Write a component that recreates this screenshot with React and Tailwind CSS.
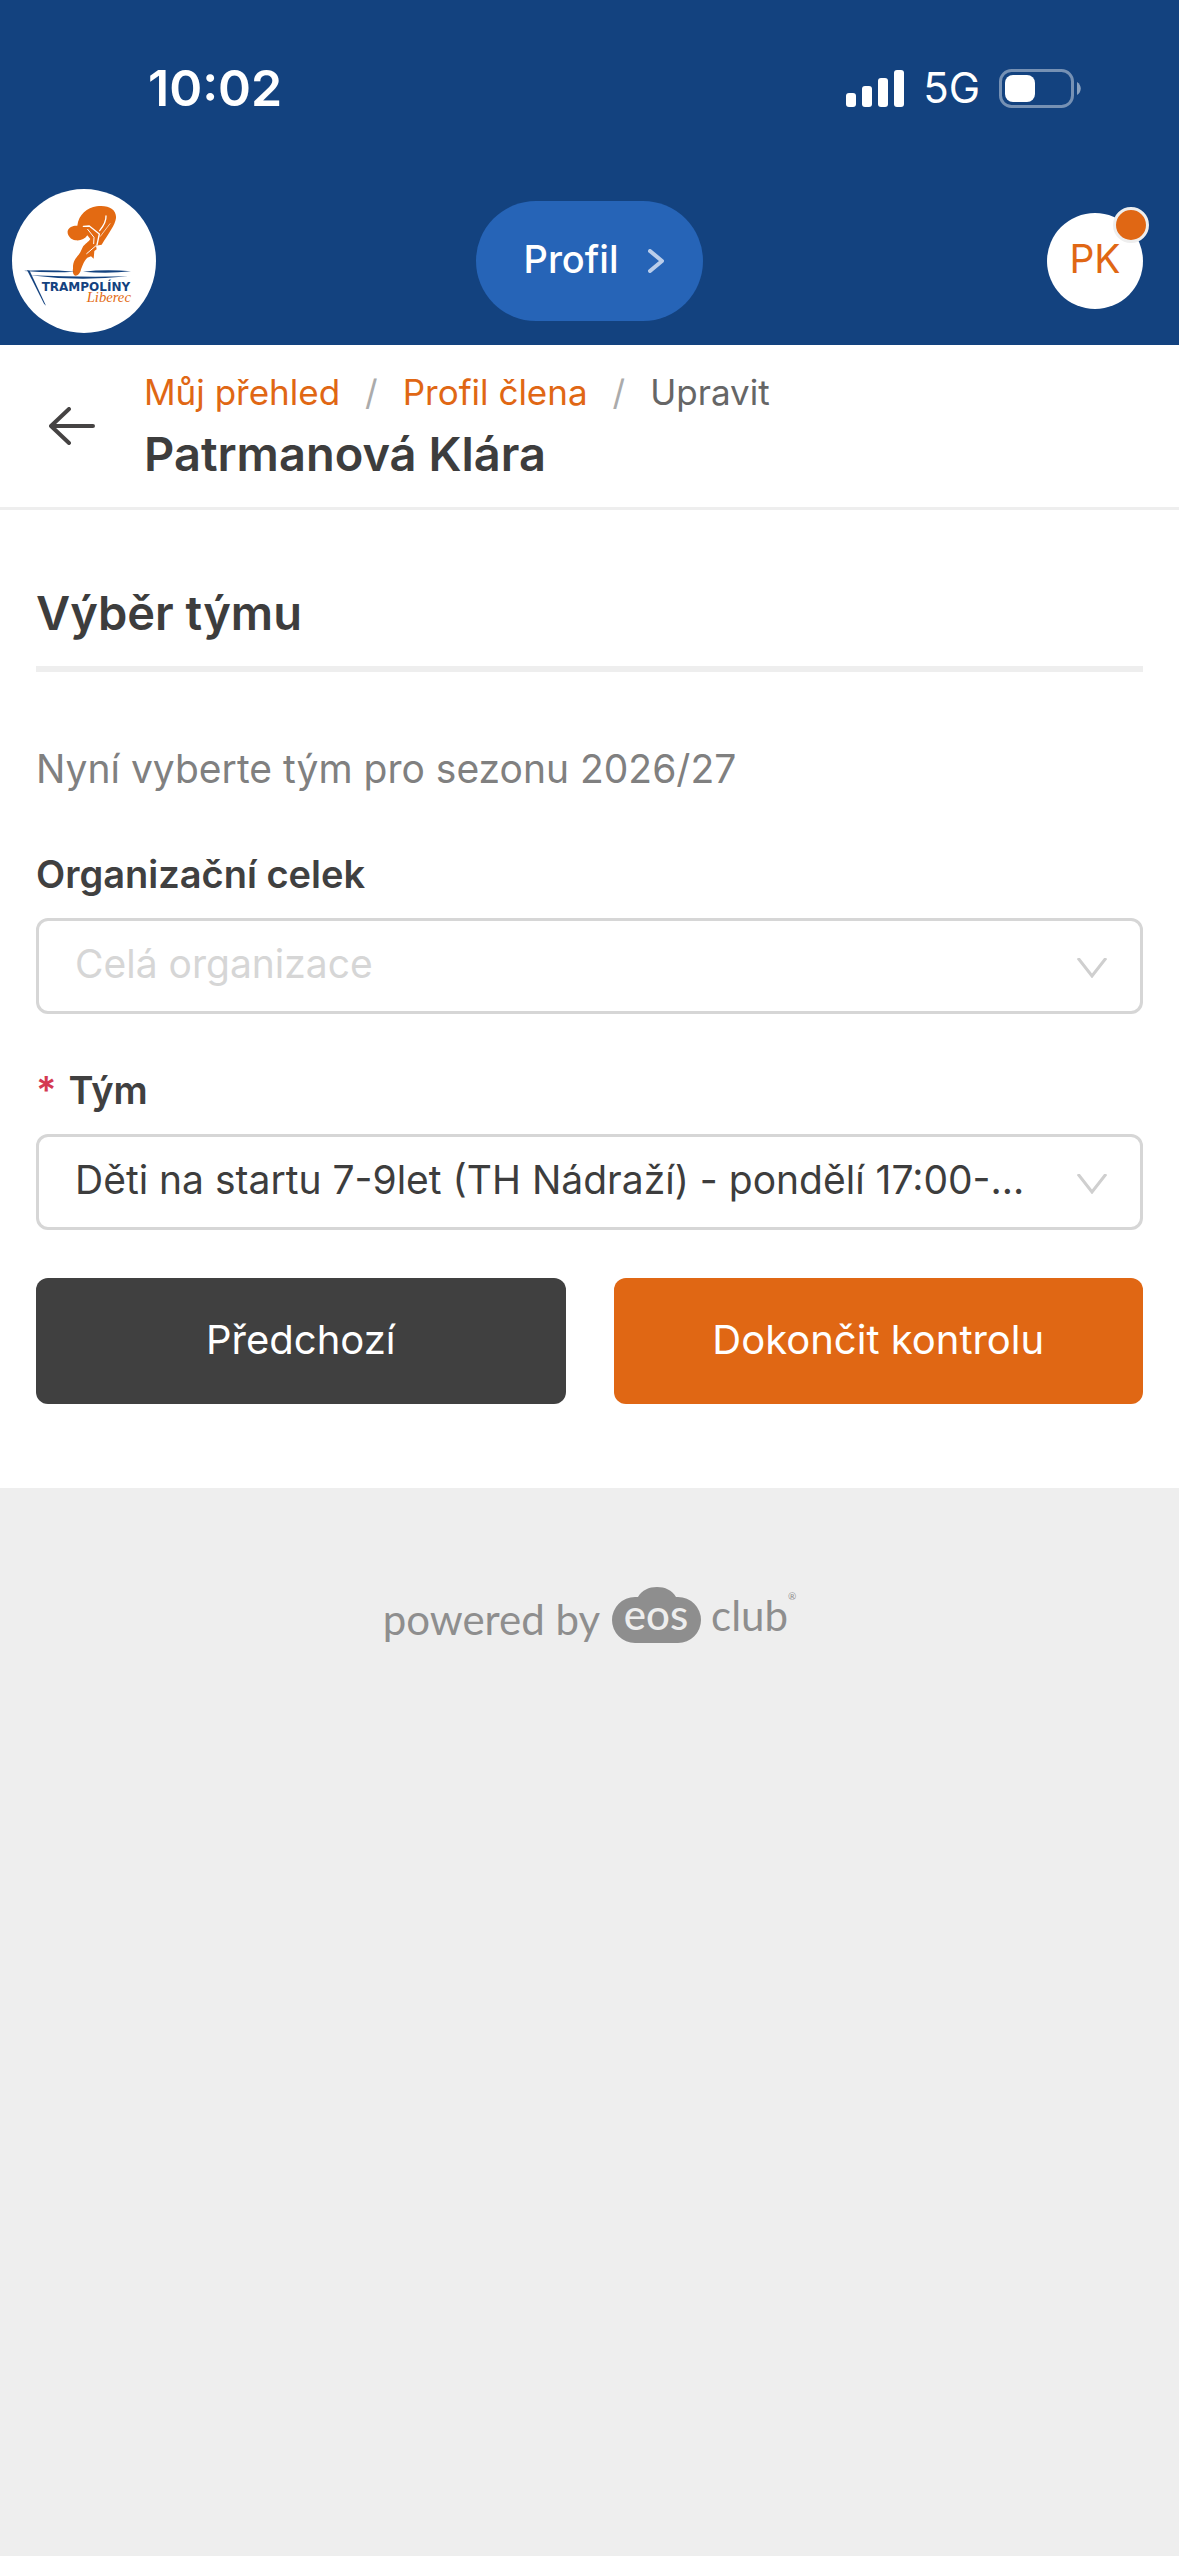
function ClubLogo() {
  return (
    <svg viewBox="36 27 432 432" className="size-36" role="img" aria-label="Trampolíny Liberec">
      <circle cx="252" cy="243" r="216" fill="#fff" />
      <g fill="#e36a12">
        <path d="M232 137C236 104 262 83 290 79C326 74 350 89 348 114C346 134 326 160 305 194L288 197L290 208L283 213L281 236L273 229L262 233C250 245 248 257 243 268C241 280 233 287 227 287C219 286 217 274 219 266C218 246 226 235 236 224C244 214 246 204 250 198C262 186 267 184 271 177L262 166C255 177 241 183 227 181C211 179 201 165 203 153C206 141 220 136 232 137Z" />
      </g>
      <g fill="none" stroke="#fff" strokeLinecap="round" strokeLinejoin="round">
        <path d="M250 139L268 138L298 162L291 195" strokeWidth="4" />
        <path d="M263 148L282 172L281 191" strokeWidth="3" />
        <path d="M318 108C319 124 311 137 299 152" strokeWidth="4" />
        <path d="M330 131L301 169" strokeWidth="2" />
        <path d="M288 197L260 221" strokeWidth="3" />
      </g>
      <g fill="#13427f">
        <path d="M74 272Q150 269 225 275Q150 280 74 273Z" />
        <path d="M249 275Q320 267 393 274Q320 282 249 275Z" />
        <path d="M90 286Q235 292 384 289Q235 305 90 286Z" />
        <path d="M81 270L89 272L138 377L132 371Z" />
      </g>
      <text x="125" y="333" fontSize="36" fontWeight="700" fill="#13427f" className="font-['DejaVu_Sans',sans-serif]">TRAMPOLÍNY</text>
      <text x="260" y="367" fontSize="44" fontStyle="italic" fill="#e36a12" className="font-['Liberation_Serif',serif]">Liberec</text>
    </svg>
  );
}

function StatusBar() {
  return (
    <div className="flex h-[177px] items-start justify-between pr-[98px] pl-[148px] pt-[58px] text-white">
      <span className="text-[50px] leading-[60px] font-semibold">10:02</span>
      <div className="flex h-[60px] items-center gap-[19px]">
        <svg viewBox="0 0 58 37" className="h-[37px] w-[58px]" fill="currentColor" aria-hidden="true">
          <rect x="0" y="23" width="10" height="14" rx="3" />
          <rect x="16" y="16" width="10" height="21" rx="3" />
          <rect x="32" y="8" width="10" height="29" rx="3" />
          <rect x="48" y="0" width="10" height="37" rx="3" />
        </svg>
        <span className="text-[42px] leading-[60px]">5G</span>
        <svg viewBox="0 0 82 39" className="h-[39px] w-[82px]" aria-hidden="true">
          <rect x="1.5" y="1.5" width="72" height="36" rx="11" fill="none" stroke="#fff" strokeOpacity=".42" strokeWidth="3" />
          <rect x="6" y="6" width="30" height="27" rx="8" fill="#fff" />
          <path d="M78 13C83 16 83 23 78 26Z" fill="#fff" fillOpacity=".5" />
        </svg>
      </div>
    </div>
  );
}

function SelectField({ id, label, required, text, muted }) {
  return (
    <div>
      <label htmlFor={id} className="flex gap-3 text-[38px] leading-[60px] font-semibold text-[#404040]">
        {required && <span className="text-[#d43a52]">*</span>}
        {label}
      </label>
      <div className="relative mt-[14px]">
        <select
          id={id}
          className={
            "block h-24 w-full appearance-none truncate rounded-xl border-[3px] border-[#d6d6d6] bg-white pr-[90px] pb-[3px] pl-9 text-[39px] " +
            (muted ? "text-[#d6d6d6]" : "text-[#3d3d3d]")
          }
        >
          <option>{text}</option>
        </select>
        <svg viewBox="0 0 30 20" className="pointer-events-none absolute top-10 right-9 h-5 w-[30px]" fill="none" stroke="#cfcfcf" strokeWidth="3" aria-hidden="true">
          <path d="M1 0L15 18L29 0" />
        </svg>
      </div>
    </div>
  );
}

export default function App() {
  return (
    <div className="min-h-screen bg-[#eeeeee] font-[Inter,sans-serif] text-[#3d3d3d]">
      <header className="bg-[#13427f]">
        <StatusBar />
        <div className="grid h-[168px] grid-cols-3 items-center pr-9 pl-3">
          <a href="#domu" className="justify-self-start"><ClubLogo /></a>
          <button className="ml-6 flex h-[120px] items-center gap-[30px] justify-self-center rounded-[60px] bg-[#2664b7] pr-[39px] pl-12 text-[38px] font-medium text-white">
            <span className="pb-[3px]">Profil</span>
            <svg viewBox="0 0 16 24" className="h-6 w-4" fill="none" stroke="#b9cdea" strokeWidth="4" strokeLinecap="round" strokeLinejoin="round" aria-hidden="true">
              <path d="M2 2L14 12L2 22" />
            </svg>
          </button>
          <button className="relative size-24 justify-self-end rounded-full bg-white pb-[3px] text-[39px] text-[#e06714]">
            PK
            <span className="absolute -top-[6px] -right-[6px] size-9 rounded-full border-[3px] border-[#eeeeee] bg-[#e06714]" />
          </button>
        </div>
      </header>

      <div className="flex h-[165px] items-center border-b-[3px] border-[#eeeeee] bg-white">
        <button aria-label="Zpět" className="flex w-36 shrink-0 justify-center">
          <svg viewBox="0 0 46 38" className="h-[38px] w-[46px]" fill="none" stroke="#454343" strokeWidth="4" strokeLinecap="round" strokeLinejoin="round" aria-hidden="true">
            <path d="M20 2L2 19L20 36M2 19H44" />
          </svg>
        </button>
        <div className="pb-1">
          <nav aria-label="Drobečková navigace" className="flex gap-[25px] text-[35px] leading-[60px]">
            <a href="#prehled" className="text-[#e06714]">Můj přehled</a>
            <span className="text-[#ababab]">/</span>
            <a href="#profil" className="text-[#e06714]">Profil člena</a>
            <span className="text-[#ababab]">/</span>
            <span className="text-[#666666]">Upravit</span>
          </nav>
          <h1 className="text-[47px] leading-[64px] font-semibold">Patrmanová Klára</h1>
        </div>
      </div>

      <main className="bg-white px-9 pt-[67px] pb-[84px]">
        <h2 className="border-b-[6px] border-[#eeeeee] pb-[17px] text-[47px] leading-[72px] font-semibold">Výběr týmu</h2>
        <p className="mt-[67px] text-[39px] leading-[60px] text-[#808080]">Nyní vyberte tým pro sezonu 2026/27</p>
        <form className="mt-[45px]" onSubmit={(e) => e.preventDefault()}>
          <div className="flex flex-col gap-[46px]">
            <SelectField id="celek" label="Organizační celek" text="Celá organizace" muted />
            <SelectField id="tym" label="Tým" required text="Děti na startu 7-9let (TH Nádraží) - pondělí 17:00-..." />
          </div>
          <div className="mt-12 grid grid-cols-2 gap-12 text-[40px] text-white">
            <button type="button" className="h-[126px] rounded-xl bg-[#404040] pb-[3px]">Předchozí</button>
            <button type="submit" className="h-[126px] rounded-xl bg-[#e06714] pb-[3px]">Dokončit kontrolu</button>
          </div>
        </form>
      </main>

      <footer className="flex items-center justify-center pt-[93px] font-[Lato,sans-serif] text-[42px] leading-[60px] text-[#8e8e8e]">
        <span className="pt-2">powered by</span>
        <svg viewBox="0 0 89 57" className="mr-[10px] ml-3 h-[57px] w-[89px]" role="img" aria-label="eos">
          <path fill="#8e8e8e" d="M23 10H26C30 3 37 0 45 0S60 3 64 10H66A23 23 0 0 1 66 56H23A23 23 0 0 1 23 10Z" />
          <text x="44" y="43" fontSize="42" fontWeight="500" textAnchor="middle" fill="#eeeeee">eos</text>
        </svg>
        <span>club</span>
        <span className="self-start text-[10px] leading-[30px]">®</span>
      </footer>
    </div>
  );
}
